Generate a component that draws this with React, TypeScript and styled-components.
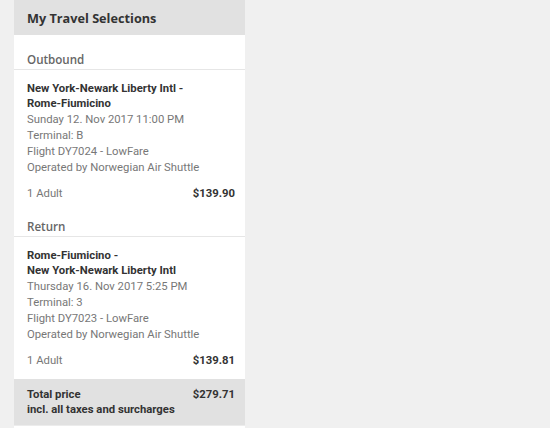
import React from "react";
import styled, { createGlobalStyle } from "styled-components";

const Global = createGlobalStyle`
  html, body { margin: 0; padding: 0; background: #f0f0f0; }
  body { font-family: "Roboto", "Lato", sans-serif; -webkit-font-smoothing: antialiased; }
`;

const Panel = styled.div`
  margin-left: 14px;
  width: 231px;
  background: #fff;
`;

const Header = styled.div`
  height: 35px;
  background: #e1e1e1;
  display: flex;
  align-items: center;
  padding: 0 13px;
  font-family: "Open Sans", sans-serif;
  font-weight: 700;
  font-size: 12.7px;
  color: #333;
`;

const SectionTitle = styled.div`
  padding: 16px 13px 0;
  line-height: 18px;
  font-family: "Open Sans", sans-serif;
  font-weight: 600;
  font-size: 11.6px;
  color: #666;
  border-bottom: 1px solid #e6e6e6;
`;

const Flight = styled.div`
  padding: 11px 10px 0 13px;
`;

const Route = styled.div`
  font-weight: 700;
  font-size: 11.3px;
  line-height: 15px;
  color: #333;
  &:nth-child(2) { margin-bottom: 1px; }
`;

const Detail = styled.div`
  font-size: 11.3px;
  line-height: 16px;
  color: #777;
`;

const PriceRow = styled.div`
  display: flex;
  justify-content: space-between;
  align-items: flex-start;
  margin-top: 10px;
  font-size: 11.3px;
  line-height: 16px;
  color: #777;
`;

const Price = styled.span`
  font-weight: 700;
  color: #333;
`;

const Total = styled.div`
  background: #e1e1e1;
  margin-top: 10px;
  padding: 8px 10px 8px 13px;
  display: flex;
  justify-content: space-between;
  font-weight: 700;
  font-size: 11.3px;
  line-height: 15px;
  color: #333;
`;

const Footer = styled.div`
  height: 10px;
  border-top: 1px solid #ececec;
  background: #fff;
`;

type Leg = {
  title: string;
  from: string;
  to: string;
  date: string;
  terminal: string;
  flight: string;
  price: string;
};

const legs: Leg[] = [
  {
    title: "Outbound",
    from: "New York-Newark Liberty Intl -",
    to: "Rome-Fiumicino",
    date: "Sunday 12. Nov 2017 11:00 PM",
    terminal: "Terminal: B",
    flight: "Flight DY7024 - LowFare",
    price: "$139.90",
  },
  {
    title: "Return",
    from: "Rome-Fiumicino -",
    to: "New York-Newark Liberty Intl",
    date: "Thursday 16. Nov 2017 5:25 PM",
    terminal: "Terminal: 3",
    flight: "Flight DY7023 - LowFare",
    price: "$139.81",
  },
];

export default function App() {
  return (
    <>
      <Global />
      <Panel>
        <Header>My Travel Selections</Header>
        {legs.map((l) => (
          <React.Fragment key={l.title}>
            <SectionTitle>{l.title}</SectionTitle>
            <Flight>
              <Route>{l.from}</Route>
              <Route>{l.to}</Route>
              <Detail>{l.date}</Detail>
              <Detail>{l.terminal}</Detail>
              <Detail>{l.flight}</Detail>
              <Detail>Operated by Norwegian Air Shuttle</Detail>
              <PriceRow>
                <span>1 Adult</span>
                <Price>{l.price}</Price>
              </PriceRow>
            </Flight>
          </React.Fragment>
        ))}
        <Total>
          <div>
            <div>Total price</div>
            <div>incl. all taxes and surcharges</div>
          </div>
          <div>$279.71</div>
        </Total>
        <Footer />
      </Panel>
    </>
  );
}
